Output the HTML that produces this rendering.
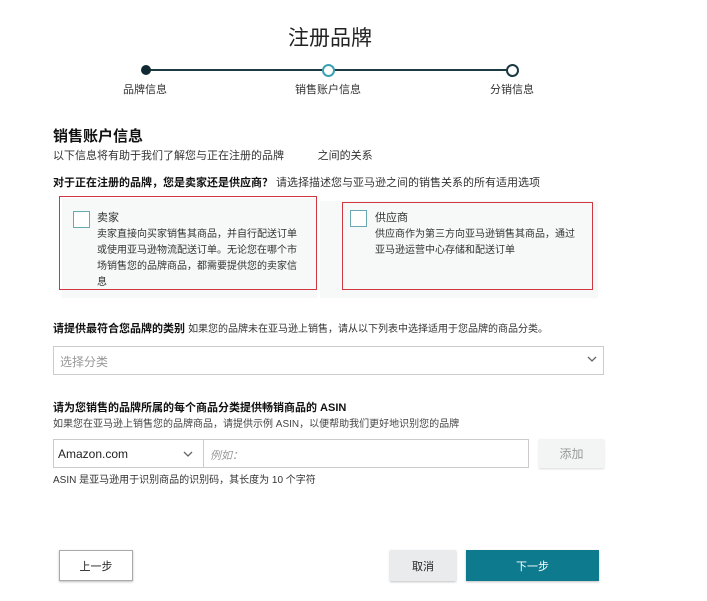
<!DOCTYPE html>
<html><head><meta charset="utf-8"><style>
body{margin:0;width:707px;height:601px;background:#fff;font-family:"Liberation Sans","Noto Sans CJK SC",sans-serif;color:#111;position:relative;overflow:hidden}
.a{position:absolute;white-space:nowrap}
.s{font-size:11px;color:#333}
.card{position:absolute;background:#f7f8f8;}
.rb{position:absolute;border:1px solid #d0383f}
.cb{position:absolute;width:15px;height:15px;border:1px solid #6aa9b2;background:#fff}
.btn{position:absolute;box-sizing:border-box;font-size:11px;display:flex;align-items:center;justify-content:center;box-shadow:0 1px 2px rgba(0,0,0,.25)}
.ct{font-size:10px;line-height:16px;color:#333}
</style></head><body>
<div class="a" style="left:288px;top:22px;font-size:21px;color:#222">注册品牌</div>
<div class="a" style="left:146px;top:69px;width:366px;height:2px;background:#1b3a44"></div>
<div class="a" style="left:141px;top:65px;width:10px;height:10px;border-radius:50%;background:#0f2a33"></div>
<div class="a" style="left:322px;top:64px;width:9px;height:9px;border-radius:50%;border:2px solid #3aa3b3;background:#fff"></div>
<div class="a" style="left:506px;top:64px;width:9px;height:9px;border-radius:50%;border:2px solid #1b3a44;background:#fff"></div>
<div class="a s" style="left:123px;top:81px">品牌信息</div>
<div class="a s" style="left:295px;top:81px">销售账户信息</div>
<div class="a s" style="left:490px;top:81px">分销信息</div>

<div class="a" style="left:53px;top:125px;font-size:15px;font-weight:bold">销售账户信息</div>
<div class="a s" style="left:53px;top:147px">以下信息将有助于我们了解您与正在注册的品牌 &nbsp; &nbsp; &nbsp; &nbsp; &nbsp; 之间的关系</div>
<div class="a s" style="left:53px;top:174px"><b style="color:#111">对于正在注册的品牌，您是卖家还是供应商？</b> 请选择描述您与亚马逊之间的销售关系的所有适用选项</div>

<div class="card" style="left:62px;top:198px;width:255px;height:100px"></div>
<div class="rb" style="left:59px;top:196px;width:256px;height:92px"></div>
<div class="cb" style="left:73px;top:211px"></div>
<div class="a ct" style="left:97px;top:210px"><span style="font-size:11px">卖家</span><br>卖家直接向买家销售其商品，并自行配送订单<br>或使用亚马逊物流配送订单。无论您在哪个市<br>场销售您的品牌商品，都需要提供您的卖家信<br>息</div>

<div class="card" style="left:320px;top:201px;width:278px;height:97px"></div>
<div class="rb" style="left:342px;top:202px;width:249px;height:86px"></div>
<div class="cb" style="left:350px;top:210px"></div>
<div class="a ct" style="left:375px;top:210px"><span style="font-size:11px">供应商</span><br>供应商作为第三方向亚马逊销售其商品，通过<br>亚马逊运营中心存储和配送订单</div>

<div class="a s" style="left:53px;top:320px"><b style="color:#111">请提供最符合您品牌的类别</b> <span style="font-size:10px">如果您的品牌未在亚马逊上销售，请从以下列表中选择适用于您品牌的商品分类。</span></div>
<div class="a" style="left:53px;top:346px;width:551px;height:29px;border:1px solid #ccc;box-sizing:border-box"></div>
<div class="a" style="left:60px;top:353px;font-size:12px;color:#999">选择分类</div>
<svg class="a" style="left:587px;top:356px" width="10" height="7"><path d="M1 1L5 5L9 1" fill="none" stroke="#666" stroke-width="1.3"/></svg>

<div class="a s" style="left:53px;top:399px;font-weight:bold;color:#111">请为您销售的品牌所属的每个商品分类提供畅销商品的 ASIN</div>
<div class="a" style="left:53px;top:415px;font-size:10px;color:#444">如果您在亚马逊上销售您的品牌商品，请提供示例 ASIN，以便帮助我们更好地识别您的品牌</div>
<div class="a" style="left:53px;top:439px;width:476px;height:29px;border:1px solid #ccc;box-sizing:border-box"></div>
<div class="a" style="left:203px;top:439px;width:1px;height:29px;background:#ccc"></div>
<div class="a" style="left:58px;top:447px;font-size:12px;color:#222">Amazon.com</div>
<svg class="a" style="left:183px;top:451px" width="10" height="7"><path d="M1 1L5 5L9 1" fill="none" stroke="#666" stroke-width="1.3"/></svg>
<div class="a" style="left:210px;top:447px;font-size:11px;color:#999;font-style:italic">例如：</div>
<div class="btn" style="left:539px;top:439px;width:65px;height:29px;background:#f3f4f4;color:#999;font-size:12px;box-shadow:0 1px 2px rgba(0,0,0,.15)">添加</div>
<div class="a" style="left:53px;top:471px;font-size:10px;color:#333">ASIN 是亚马逊用于识别商品的识别码，其长度为 10 个字符</div>

<div class="btn" style="left:59px;top:550px;width:74px;height:31px;border:1px solid #aaa;background:#fff;color:#222">上一步</div>
<div class="btn" style="left:390px;top:550px;width:66px;height:31px;background:#e9ebec;color:#222">取消</div>
<div class="btn" style="left:466px;top:550px;width:133px;height:31px;background:#0e7a8e;color:#fff">下一步</div>
</body></html>
